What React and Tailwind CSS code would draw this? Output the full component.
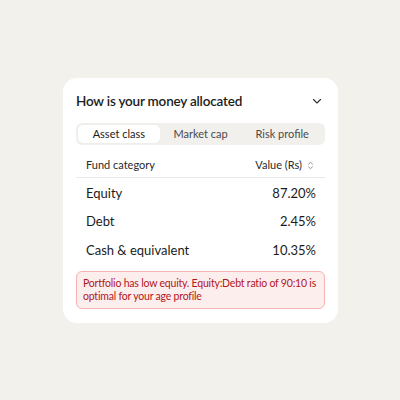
import React, { useState } from "react";

const tabs = ["Asset class", "Market cap", "Risk profile"];

const rows = [
  { name: "Equity", value: "87.20%" },
  { name: "Debt", value: "2.45%" },
  { name: "Cash & equivalent", value: "10.35%" },
];

export default function App() {
  const [active, setActive] = useState(0);

  return (
    <div className="w-[400px] h-[400px] bg-[#f3f1ec] pt-[78px] pl-[63px] font-['Lato',sans-serif]">
      <div className="w-[275px] bg-white rounded-[14px] px-[13px] pt-[14px] pb-[14px]">
        <div className="flex items-center justify-between h-[18px]">
          <h1 className="text-[13.5px] font-semibold tracking-[-0.2px] text-[#1c1c1c]">How is your money allocated</h1>
          <svg width="12" height="12" viewBox="0 0 12 12" fill="none" className="mr-[2px]">
            <path d="M2.5 4.5 6 8l3.5-3.5" stroke="#333" strokeWidth="1.1" strokeLinecap="round" strokeLinejoin="round" />
          </svg>
        </div>

        <div className="mt-[13px] flex bg-[#f1f0ec] rounded-[6px] p-[2px] h-[22px]">
          {tabs.map((t, i) => (
            <button
              key={t}
              onClick={() => setActive(i)}
              className={
                i === active
                  ? "flex-1 rounded-[5px] bg-white text-[11px] text-[#1c1c1c] shadow-[0_0_1px_rgba(0,0,0,0.08)]"
                  : "flex-1 rounded-[5px] text-[11px] text-[#4a4a4a]"
              }
            >
              {t}
            </button>
          ))}
        </div>

        <div className="mt-[10px] flex items-center justify-between pl-[10px] pr-[11px] h-[20px] text-[11px] text-[#2a2a2a]">
          <span>Fund category</span>
          <span className="flex items-center gap-[5px]">
            Value (Rs)
            <svg width="7" height="9" viewBox="0 0 7 9" fill="none">
              <path d="M1.5 3.2 3.5 1.3l2 1.9M1.5 5.8l2 1.9 2-1.9" stroke="#888" strokeWidth="0.9" strokeLinecap="round" strokeLinejoin="round" />
            </svg>
          </span>
        </div>
        <div className="mt-[2px] h-px bg-[#ebe9e5]" />

        <div className="pt-[1px]">
          {rows.map((r) => (
            <div key={r.name} className="flex items-center justify-between h-[28.5px] pl-[10px] pr-[9px] text-[13px] text-[#1c1c1c]">
              <span>{r.name}</span>
              <span>{r.value}</span>
            </div>
          ))}
        </div>

        <div className="mt-[6px] rounded-[6px] border border-[#f2b3b3] bg-[#fdeeee] px-[6px] py-[5px] text-[10.5px] leading-[13px] tracking-[-0.2px] text-[#b3151b]">
          Portfolio has low equity. Equity:Debt ratio of 90:10 is optimal for your age profile
        </div>
      </div>
    </div>
  );
}
